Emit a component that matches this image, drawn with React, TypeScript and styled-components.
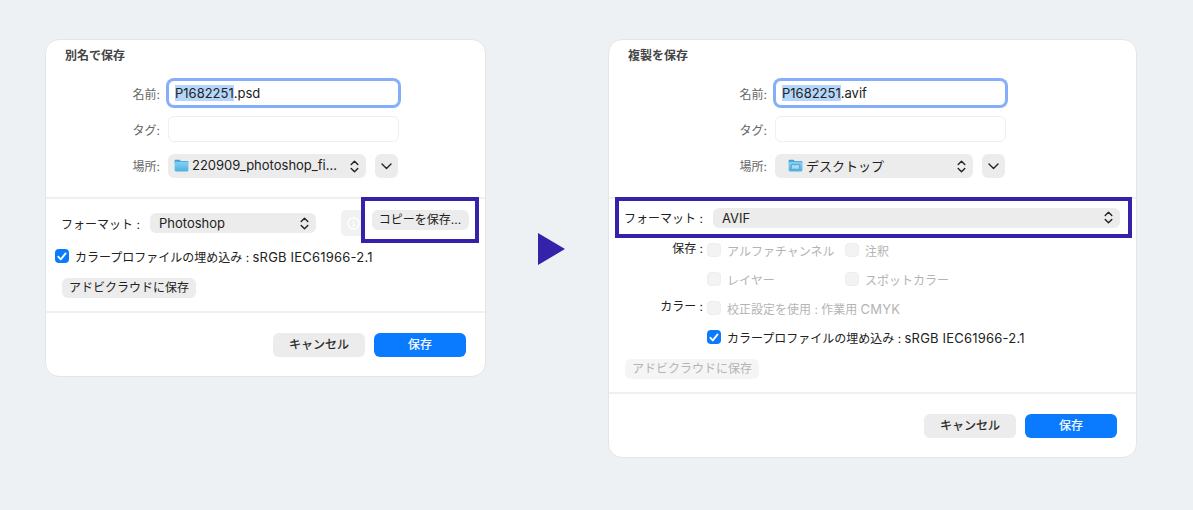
import React from "react";
import styled, { createGlobalStyle } from "styled-components";

const GlobalStyle = createGlobalStyle`
  html, body {
    margin: 0;
    padding: 0;
    background: #edf1f4;
    font-family: Inter, "Noto Sans CJK JP", sans-serif;
  }
`;

const Stepper = () => (
  <svg width="9" height="13" viewBox="0 0 9 13" fill="none" stroke="#222" strokeWidth="1.4" strokeLinecap="round" strokeLinejoin="round">
    <path d="M1.2 4.6 4.5 1.3l3.3 3.3" />
    <path d="M1.2 8.4 4.5 11.7l3.3-3.3" />
  </svg>
);

const Chevron = () => (
  <svg width="11" height="7" viewBox="0 0 11 7" fill="none" stroke="#222" strokeWidth="1.4" strokeLinecap="round" strokeLinejoin="round">
    <path d="M1 1l4.5 4.5L10 1" />
  </svg>
);

const Folder = ({ desktop }: { desktop?: boolean }) => (
  <svg width="15" height="13" viewBox="0 0 15 13">
    <defs>
      <linearGradient id={desktop ? "fd" : "ff"} x1="0" y1="0" x2="0" y2="1">
        <stop offset="0" stopColor="#86d0f2" />
        <stop offset="1" stopColor="#4fb0e4" />
      </linearGradient>
    </defs>
    <path d="M.6 2.2C.6 1.3 1.2.8 2 .8h3c.6 0 .9.2 1.3.6l.6.6h6.3c.7 0 1.2.5 1.2 1.2V4H.6z" fill="#3f9fd8" />
    <rect x="0.6" y="2.8" width="13.8" height="9.6" rx="1.4" fill={`url(#${desktop ? "fd" : "ff"})`} />
    {desktop && <rect x="3.4" y="5.6" width="8.2" height="4.6" rx="0.5" fill="#a8dbf3" stroke="#3f93c7" strokeWidth="0.7" />}
  </svg>
);

const CheckMark = () => (
  <svg width="10" height="9" viewBox="0 0 10 9" fill="none" stroke="#fff" strokeWidth="1.9" strokeLinecap="round" strokeLinejoin="round">
    <path d="M1.4 4.8 3.8 7.4 8.6 1.4" />
  </svg>
);

const InfoGlyph = () => (
  <svg width="13" height="13" viewBox="0 0 13 13" fill="none" stroke="#fff" strokeWidth="1.3">
    <circle cx="6.5" cy="6.5" r="5.6" />
    <path d="M6.5 5.6v4" />
    <path d="M6.5 3.4v1" />
  </svg>
);

const SaveDialog = ({ name, ext, title, folder, desktop, children, width, labelWidth }: {
  name: string;
  ext: string;
  title: string;
  folder: string;
  desktop?: boolean;
  width: number;
  labelWidth: number;
  children: React.ReactNode;
}) => (
  <Card $width={width}>
    <Title>{title}</Title>
    <Form>
      <FieldRow>
        <FieldLabel $width={labelWidth}>名前:</FieldLabel>
        <NameField>
          <Selection>{name}</Selection>
          {ext}
        </NameField>
      </FieldRow>
      <FieldRow>
        <FieldLabel $width={labelWidth}>タグ:</FieldLabel>
        <TagField />
      </FieldRow>
      <PlaceRow>
        <FieldLabel $width={labelWidth}>場所:</FieldLabel>
        <PlaceSelect $inset={desktop ? 13 : 6}>
          <FolderName>
            <Folder desktop={desktop} />
            {folder}
          </FolderName>
          <Stepper />
        </PlaceSelect>
        <ExpandButton>
          <Chevron />
        </ExpandButton>
      </PlaceRow>
    </Form>
    {children}
    <Footer>
      <DialogButton>キャンセル</DialogButton>
      <DialogButton $primary>保存</DialogButton>
    </Footer>
  </Card>
);

const EmbedProfile = () => (
  <CheckRow>
    <CheckBox $checked>
      <CheckMark />
    </CheckBox>
    <span>
      カラープロファイルの埋め込み : <Latin>sRGB IEC61966-2.1</Latin>
    </span>
  </CheckRow>
);

const saveOptions = [
  { group: "保存 :", items: ["アルファチャンネル", "注釈"] },
  { group: "", items: ["レイヤー", "スポットカラー"] },
];

export default function App() {
  return (
    <Page>
      <GlobalStyle />
      <SaveDialog title="別名で保存" name="P1682251" ext=".psd" folder="220909_photoshop_fi..." width={441} labelWidth={114}>
        <LeftOptions>
          <FormatRow>
            <FormatLabel>フォーマット :</FormatLabel>
            <FormatSelect $width={166}>
              Photoshop
              <Stepper />
            </FormatSelect>
            <InfoButton>
              <InfoGlyph />
            </InfoButton>
          </FormatRow>
          <Callout>
            <SmallButton>コピーを保存...</SmallButton>
          </Callout>
          <LeftCheck>
            <EmbedProfile />
          </LeftCheck>
          <CloudButton>アドビクラウドに保存</CloudButton>
        </LeftOptions>
      </SaveDialog>

      <Arrow width="27" height="32" viewBox="0 0 27 32">
        <path d="M0 0 27 16 0 32z" fill="#3422ab" />
      </Arrow>

      <SaveDialog title="複製を保存" name="P1682251" ext=".avif" folder="デスクトップ" desktop width={529} labelWidth={158}>
        <OutlinedFormat>
          <FormatLabel>フォーマット :</FormatLabel>
          <FormatSelect $width={407}>
            AVIF
            <Stepper />
          </FormatSelect>
        </OutlinedFormat>
        <RightOptions>
          {saveOptions.map((row, i) => (
            <OptionRow key={i}>
              <GroupLabel>{row.group}</GroupLabel>
              {row.items.map((item) => (
                <OptionItem key={item}>
                  <CheckBox />
                  {item}
                </OptionItem>
              ))}
            </OptionRow>
          ))}
          <OptionRow>
            <GroupLabel>カラー :</GroupLabel>
            <OptionItem>
              <CheckBox />
              <span>
                校正設定を使用 : 作業用 <Latin>CMYK</Latin>
              </span>
            </OptionItem>
          </OptionRow>
          <OptionRow>
            <GroupLabel />
            <EmbedProfile />
          </OptionRow>
          <DisabledCloud>アドビクラウドに保存</DisabledCloud>
        </RightOptions>
      </SaveDialog>
    </Page>
  );
}

const Page = styled.div`
  width: 1193px;
  height: 510px;
  box-sizing: border-box;
  padding: 39px 0 0 45px;
  display: flex;
  align-items: flex-start;
  overflow: hidden;
  font-size: 12px;
  color: #222;
`;

const Card = styled.div<{ $width: number }>`
  width: ${(p) => p.$width}px;
  box-sizing: border-box;
  background: #fff;
  border: 1px solid #e3e6e8;
  border-radius: 14px;
`;

const Title = styled.div`
  height: 31px;
  padding-left: 19px;
  line-height: 31px;
  font-size: 12px;
  font-weight: 700;
  color: #444;
`;

const Form = styled.div`
  padding: 9px 0 19px 0;
  display: flex;
  flex-direction: column;
  gap: 10px;
  border-bottom: 2px solid #f0f0f0;
`;

const FieldRow = styled.div`
  display: flex;
  align-items: center;
  gap: 8px;
`;

const FieldLabel = styled.div<{ $width: number }>`
  width: ${(p) => p.$width}px;
  text-align: right;
  color: #666;
  font-size: 12px;
`;

const PlaceRow = styled(FieldRow)`
  margin-top: 2px;

  ${FieldLabel} {
    padding-bottom: 2px;
  }
`;

const TagField = styled.div`
  width: 231px;
  height: 26px;
  box-sizing: border-box;
  border: 1px solid #efefef;
  border-radius: 6px;
  background: #fff;
`;

const NameField = styled(TagField)`
  border: 1px solid #85aefa;
  box-shadow: 0 0 0 2px #85aefa;
  padding-left: 6px;
  font-size: 13px;
  line-height: 24px;
  color: #222;
`;

const Selection = styled.span`
  background: #b5d6fb;
`;

const PlaceSelect = styled.div<{ $inset: number }>`
  width: 198px;
  height: 24px;
  box-sizing: border-box;
  padding: 0 7px 0 ${(p) => p.$inset}px;
  display: flex;
  align-items: center;
  justify-content: space-between;
  background: #ececec;
  border-radius: 6px;
  font-size: 13px;
`;

const FolderName = styled.div`
  display: flex;
  align-items: center;
  gap: 3px;
  padding-bottom: 2px;
  white-space: nowrap;
`;

const ExpandButton = styled.div`
  width: 23px;
  height: 24px;
  margin-left: 1px;
  display: flex;
  align-items: center;
  justify-content: center;
  background: #ececec;
  border-radius: 6px;
`;

const LeftOptions = styled.div`
  position: relative;
  height: 114px;
  box-sizing: border-box;
  padding: 14px 15px 0 9px;
  border-bottom: 2px solid #f0f0f0;
`;

const FormatRow = styled.div`
  display: flex;
  align-items: center;
  gap: 9px;
  height: 20px;
  padding-left: 6px;
`;

const FormatLabel = styled.div`
  width: 80px;
  white-space: nowrap;
  font-size: 12px;
  color: #222;
`;

const FormatSelect = styled.div<{ $width: number }>`
  width: ${(p) => p.$width}px;
  height: 20px;
  box-sizing: border-box;
  padding: 0 7px 0 9px;
  display: flex;
  align-items: center;
  justify-content: space-between;
  background: #ececec;
  border-radius: 6px;
  font-size: 13px;
`;

const InfoButton = styled.div`
  width: 34px;
  height: 26px;
  margin-left: 16px;
  padding-left: 6px;
  box-sizing: border-box;
  display: flex;
  align-items: center;
  background: #f1f1f1;
  border-radius: 5px;
`;

const Callout = styled.div`
  position: absolute;
  top: -2px;
  right: 6px;
  width: 118px;
  height: 46px;
  box-sizing: border-box;
  border: 4px solid #3422ab;
  background: #fff;
  display: flex;
  align-items: center;
  justify-content: center;
`;

const SmallButton = styled.div`
  width: 97px;
  height: 20px;
  line-height: 20px;
  text-align: center;
  background: #ececec;
  border-radius: 6px;
  font-size: 12px;
  white-space: nowrap;
`;

const LeftCheck = styled.div`
  margin-top: 16px;
`;

const CheckRow = styled.div`
  display: flex;
  align-items: center;
  gap: 6px;
  font-size: 12px;
  height: 14px;
  white-space: nowrap;
  color: #222;
`;

const Latin = styled.span`
  font-size: 13px;
  letter-spacing: 0.2px;
`;

const CheckBox = styled.div<{ $checked?: boolean }>`
  width: 14px;
  height: 14px;
  box-sizing: border-box;
  flex: none;
  display: flex;
  align-items: center;
  justify-content: center;
  border-radius: 4px;
  background: ${(p) => (p.$checked ? "#0a7aff" : "#f3f3f3")};
  border: ${(p) => (p.$checked ? "none" : "1px solid #eeeeee")};
`;

const CloudButton = styled.div`
  width: 134px;
  height: 20px;
  margin: 15px 0 0 7px;
  line-height: 20px;
  text-align: center;
  background: #ececec;
  border-radius: 6px;
  font-size: 12px;
  white-space: nowrap;
`;

const Arrow = styled.svg`
  flex: none;
  margin: 194px 43px 0 52px;
`;

const OutlinedFormat = styled.div`
  height: 41px;
  margin: -2px 4px 0 6px;
  box-sizing: border-box;
  border: 4px solid #3422ab;
  background: #fff;
  position: relative;
  display: flex;
  align-items: center;
  gap: 9px;
  padding-left: 5px;
`;

const RightOptions = styled.div`
  padding-bottom: 13px;
  display: flex;
  flex-direction: column;
  gap: 5px;
  border-bottom: 2px solid #f0f0f0;
`;

const OptionRow = styled.div`
  height: 24px;
  display: flex;
  align-items: center;
`;

const GroupLabel = styled.div`
  width: 94px;
  margin: -6px 4px 0 0;
  text-align: right;
  white-space: nowrap;
  font-size: 12px;
  color: #222;
`;

const OptionItem = styled.div`
  width: 138px;
  display: flex;
  align-items: center;
  gap: 6px;
  font-size: 12px;
  white-space: nowrap;
  color: #b4b4b4;
`;

const DisabledCloud = styled(CloudButton)`
  margin: 5px 0 0 16px;
  background: #f5f5f5;
  color: #b4b4b4;
`;

const Footer = styled.div`
  padding: 20px 19px 19px 0;
  display: flex;
  justify-content: flex-end;
  gap: 9px;
`;

const DialogButton = styled.div<{ $primary?: boolean }>`
  width: 92px;
  height: 24px;
  line-height: 24px;
  text-align: center;
  border-radius: 6px;
  font-size: 12px;
  font-weight: 400;
  -webkit-text-stroke: 0.2px currentColor;
  background: ${(p) => (p.$primary ? "#0a7aff" : "#ececec")};
  color: ${(p) => (p.$primary ? "#fff" : "#222")};
`;
